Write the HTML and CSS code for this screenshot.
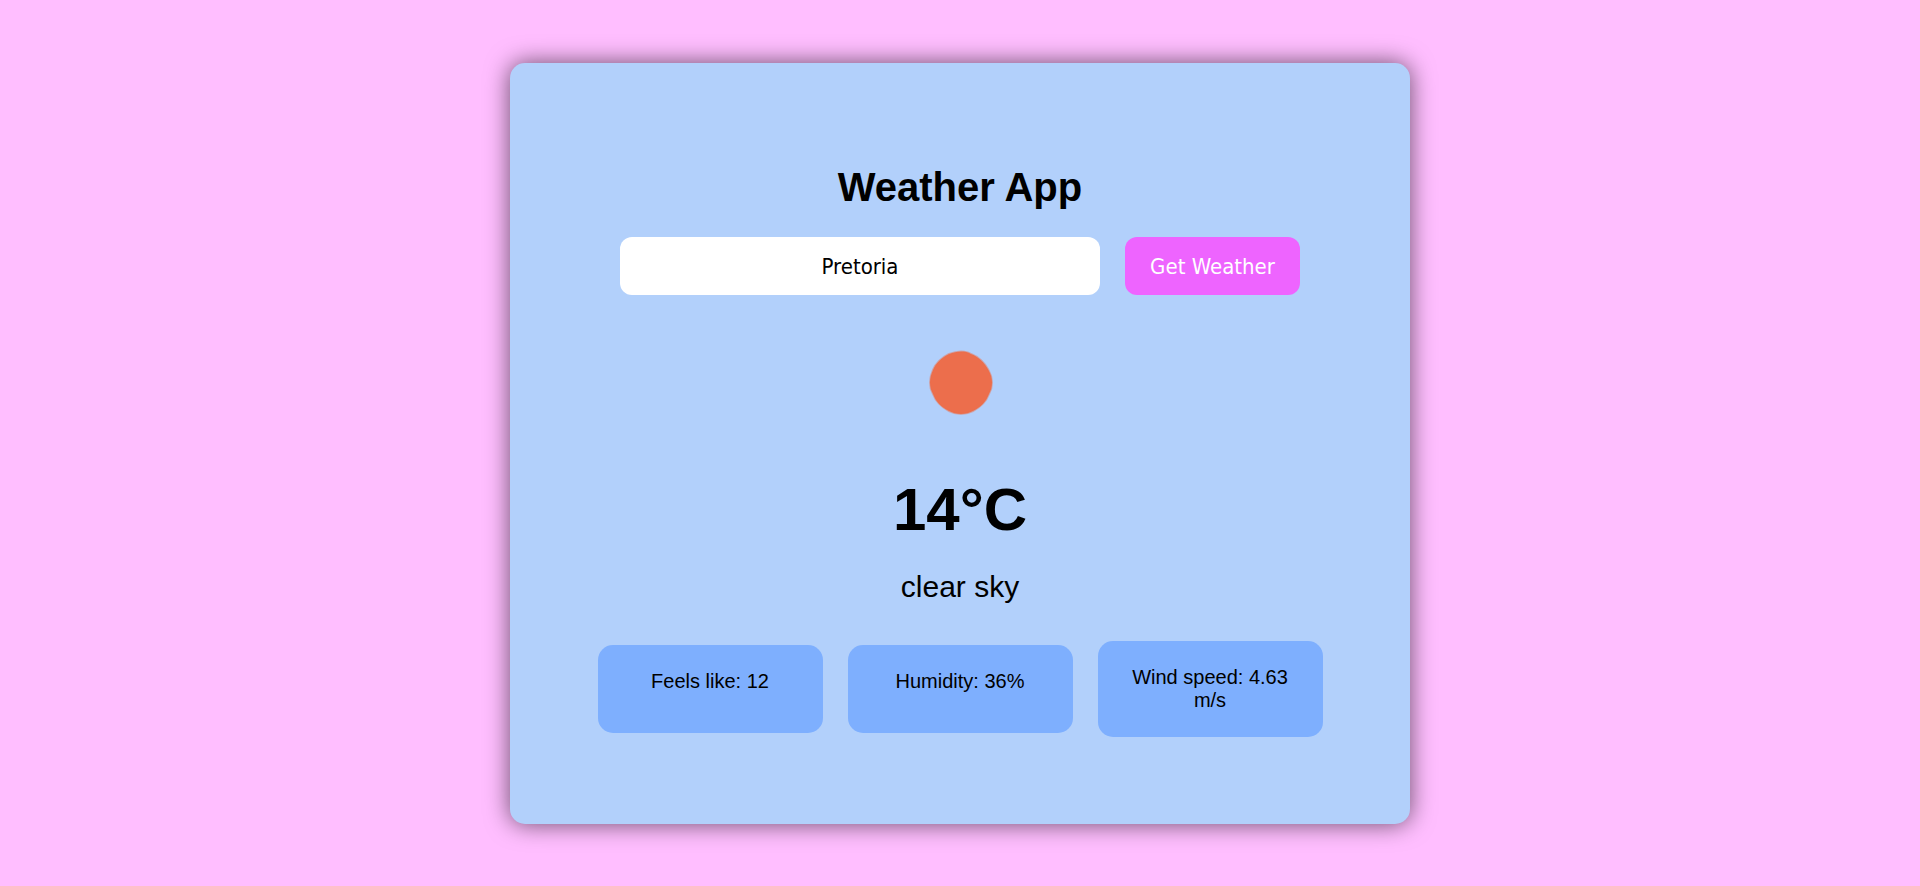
FILE: index.html
```html
<!DOCTYPE html>
<html lang="en">
<head>
<meta charset="utf-8">
<meta name="viewport" content="width=device-width, initial-scale=1">
<title>Weather App</title>
<link rel="stylesheet" href="styles.css">
</head>
<body>
<main class="card">
  <h1 class="title">Weather App</h1>
  <form class="search">
    <input class="search-input" type="text" value="Pretoria" aria-label="City">
    <button class="search-button" type="button">Get Weather</button>
  </form>
  <svg class="weather-icon" viewBox="0 0 100 100" role="img" aria-label="clear sky">
    <path fill="#ec6e4c" stroke="#ec6e4c" stroke-opacity=".45" stroke-width="2" d="M51 19.500C55 19.500 58 20 61 22C68 24.500 75 31 78.500 38C81 42.500 82 46 82 50.500C82 55 81 58.500 79 62C76 70 71 75 63 79C59 81 56 82 51 82C46 82 43 81 39 79C31 75 26 70 23 62C21 58.500 20 55 20 50.500C20 46 21 42.500 23 38C26 31 31 26 39 22C43 20.500 47 19.500 51 19.500Z"/>
  </svg>
  <h2 class="temperature">14°C</h2>
  <p class="description">clear sky</p>
  <section class="stats">
    <div class="stat">Feels like: 12</div>
    <div class="stat">Humidity: 36%</div>
    <div class="stat">Wind speed: 4.63 m/s</div>
  </section>
</main>
</body>
</html>
```

FILE: styles.css
```css
* {
  box-sizing: border-box;
}

body {
  margin: 0;
  min-height: 100vh;
  display: flex;
  align-items: center;
  justify-content: center;
  background: #ffbeff;
  color: #000;
  font-family: "Liberation Sans", Arial, sans-serif;
}

.card {
  width: 100%;
  max-width: 900px;
  padding: 101px 80px 87px;
  display: flex;
  flex-direction: column;
  align-items: center;
  background: #b2d0fb;
  border-radius: 15px;
  box-shadow: 0 0 25px rgba(0, 0, 0, 0.6);
  text-align: center;
}

.title {
  margin: 0 0 27px;
  font-size: 40px;
  line-height: 46px;
}

.search {
  display: flex;
  gap: 25px;
  width: 100%;
  max-width: 680px;
}

.search-input,
.search-button {
  height: 58px;
  padding: 2px 25px 0;
  border: 0;
  border-radius: 12px;
  font-family: Tahoma, "DejaVu Sans Condensed", "Open Sans", sans-serif;
  font-size: 22px;
}

.search-input {
  flex: 1;
  min-width: 0;
  background: #fff;
  color: #000;
  text-align: center;
}

.search-button {
  flex: 0 0 175px;
  padding: 2px 0 0;
  background: #ee64ff;
  color: #fff;
  white-space: nowrap;
}

.weather-icon {
  width: 100px;
  height: 100px;
  margin: 37px 0 43px;
}

.temperature {
  margin: 0 0 26px;
  font-size: 60px;
  line-height: 69px;
}

.description {
  margin: 0 0 37px;
  font-size: 30px;
  line-height: 34px;
}

.stats {
  display: flex;
  flex-wrap: wrap;
  align-items: center;
  justify-content: center;
  gap: 25px;
}

.stat {
  width: 225px;
  min-height: 88px;
  padding: 25px;
  background: #7eaffe;
  border-radius: 15px;
  font-size: 20px;
  line-height: 23px;
}
```
